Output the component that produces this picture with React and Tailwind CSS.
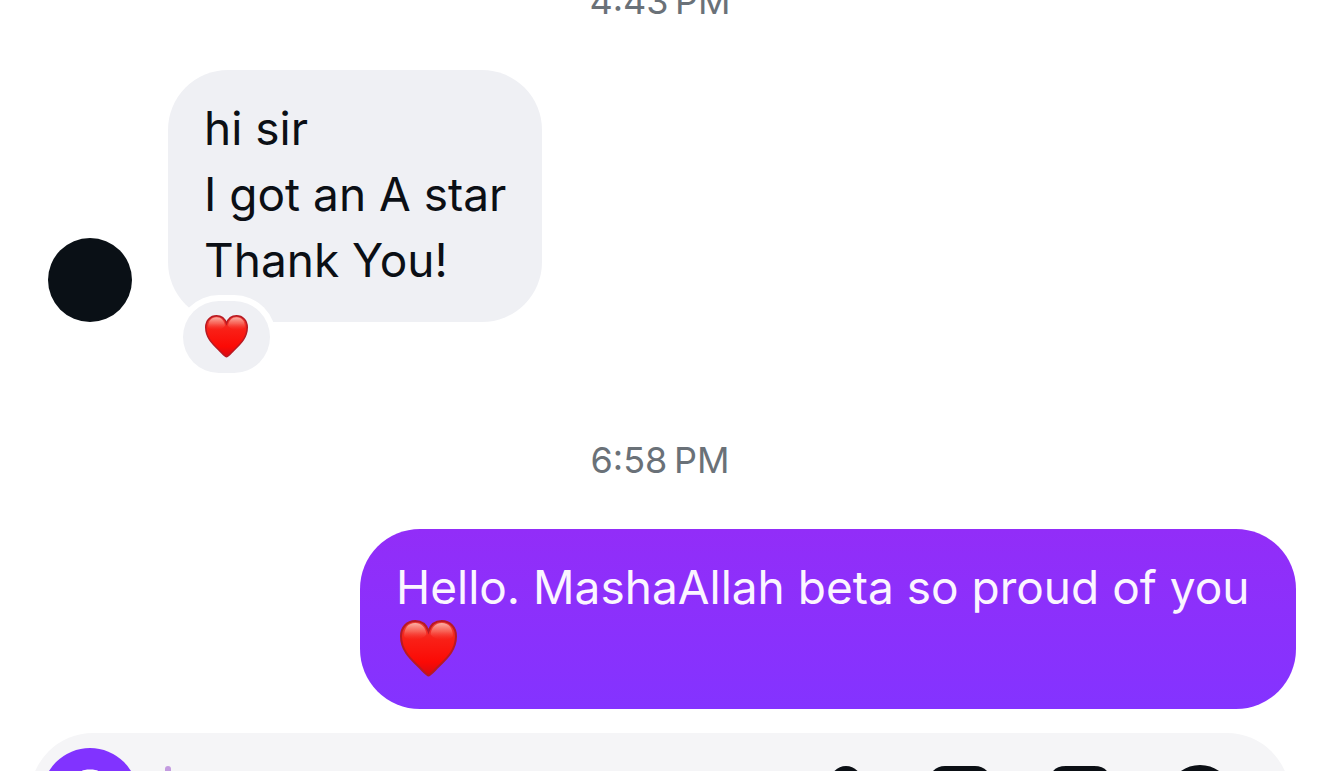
import React, { useId, useState } from "react";

const Heart = ({ className }) => {
    const id = useId();

    return (
        <svg viewBox="0 0 56 56" className={className} role="img" aria-label="red heart">
            <defs>
                <linearGradient id={`${id}-body`} x1="0" y1="0" x2="0" y2="1">
                    <stop offset="0" stopColor="#e8403a" />
                    <stop offset="0.35" stopColor="#f91f16" />
                    <stop offset="0.75" stopColor="#fb0a05" />
                    <stop offset="1" stopColor="#d80a12" />
                </linearGradient>
                <linearGradient id={`${id}-shine`} x1="0" y1="0" x2="0" y2="1">
                    <stop offset="0" stopColor="#ffc4b8" stopOpacity="0.85" />
                    <stop offset="0.5" stopColor="#ff9080" stopOpacity="0.5" />
                    <stop offset="1" stopColor="#ff3a30" stopOpacity="0" />
                </linearGradient>
            </defs>
            <path
                d="M28 54.500C26.500 54.500 24 51.500 18 45.500C9 37 1 29 1 16C1 7 7 1 15 1C21.500 1 26 5 28 11C30 5 34.500 1 41 1C49 1 55 7 55 16C55 29 47 37 38 45.500C32 51.500 29.500 54.500 28 54.500Z"
                fill={`url(#${id}-body)`}
                stroke="#b81a22"
                strokeWidth="2"
            />
            <path d="M4 16C4 8 8 3 15 3C21 3 25 7 26 14C22 20 9 22 4 16Z" fill={`url(#${id}-shine)`} />
            <path d="M52 16C52 8 48 3 41 3C35 3 31 7 30 14C34 20 47 22 52 16Z" fill={`url(#${id}-shine)`} />
        </svg>
    );
};

const Timestamp = ({ time, period }) => (
    <p className="mb-[47px] text-center text-[36px] leading-[44px] text-[#6a7178]">
        {time}&#8202;&#8202;{period}
    </p>
);

const IncomingMessage = ({ lines }) => (
    <div className="flex items-end gap-9 pl-12">
        <div className="size-[84px] shrink-0 rounded-full bg-[#0a1016]" />
        <div className="relative rounded-[60px] bg-[#eff0f4] px-9 pt-[25px] pb-[29px] text-[46px] leading-[66px] text-[#0b0f15]">
            {lines.map((line) => (
                <p key={line}>{line}</p>
            ))}
            <button
                aria-label="Reactions"
                className="absolute -bottom-[51px] left-[15px] flex h-[72px] w-[87px] items-center justify-center rounded-full bg-[#eff0f4] pb-[2px] ring-6 ring-white"
            >
                <Heart className="size-[43px]" />
            </button>
        </div>
    </div>
);

const OutgoingMessage = ({ text }) => (
    <div className="flex justify-end pl-12 pr-6">
        <div className="w-[936px] rounded-[60px] bg-linear-to-b from-[#922df8] to-[#8433ff] px-9 pt-[25px] pb-[29px] text-[46px] leading-[66px] text-[#fbf5ff]">
            <p>{text}</p>
            <div className="flex h-[60px] items-start pl-1">
                <Heart className="size-[57px]" />
            </div>
        </div>
    </div>
);

const iconProps = {
    viewBox: "0 0 72 72",
    fill: "none",
    stroke: "#0b0f15",
    strokeWidth: 6,
    strokeLinecap: "round",
    strokeLinejoin: "round",
    className: "size-[72px]",
};

const Composer = () => {
    const [draft, setDraft] = useState("");

    return (
        <div className="mx-[30px] mt-6 flex h-[126px] shrink-0 items-center rounded-[63px] bg-[#f5f5f7] pl-3 pr-[54px]">
            <button aria-label="Camera" className="flex size-24 shrink-0 items-center justify-center rounded-full bg-[#8133ff]">
                <svg viewBox="0 0 54 54" className="size-[54px]" fill="#fff">
                    <path d="M27 0.500C36 0.500 37 3 40 7H46Q54 8 54 16V40Q54 48 46 48H8Q0 48 0 40V16Q0 8 8 7H14C17 3 18 0.500 27 0.500Z" />
                    <circle cx="27" cy="27" r="11" fill="#8133ff" />
                </svg>
            </button>
            <span className="ml-[27px] h-[60px] w-[6px] shrink-0 rounded-full bg-[#c39be0]" />
            <input
                aria-label="Message"
                value={draft}
                onChange={(e) => setDraft(e.target.value)}
                className="min-w-0 flex-1 bg-transparent pl-2 text-[46px] caret-[#8133ff] outline-none"
            />
            <div className="flex shrink-0 gap-[48px]">
                <button aria-label="Voice message">
                    <svg {...iconProps}>
                        <rect x="26" y="6" width="32" height="40" rx="16" fill="#0b0f15" strokeWidth="0" />
                        <path d="M18 34C18 64 66 64 66 34M42 58V67" />
                    </svg>
                </button>
                <button aria-label="Photos">
                    <svg {...iconProps}>
                        <rect x="7" y="9" width="58" height="56" rx="14" />
                        <circle cx="24" cy="27" r="5" />
                        <path d="M8 56L27 42L38 51L50 35L64 49" />
                    </svg>
                </button>
                <button aria-label="Stickers">
                    <svg {...iconProps}>
                        <path d="M22 9H50Q63 9 63 22V40L40 64H22Q9 64 9 51V22Q9 9 22 9ZM63 40H50Q40 40 40 50V64" />
                    </svg>
                </button>
                <button aria-label="More">
                    <svg {...iconProps}>
                        <circle cx="36" cy="38" r="30" />
                        <path d="M36 25V51M23 38H49" />
                    </svg>
                </button>
            </div>
        </div>
    );
};

export default function App() {
    return (
        <div className="flex h-screen flex-col overflow-hidden bg-white font-['Inter','Liberation_Sans',sans-serif]">
            <main className="-mt-[21px] shrink-0">
                <Timestamp time="4:43" period="PM" />
                <IncomingMessage lines={["hi sir", "I got an A star", "Thank You!"]} />
                <div className="h-[116px]" />
                <Timestamp time="6:58" period="PM" />
                <OutgoingMessage text="Hello. MashaAllah beta so proud of you" />
            </main>
            <Composer />
        </div>
    );
}
